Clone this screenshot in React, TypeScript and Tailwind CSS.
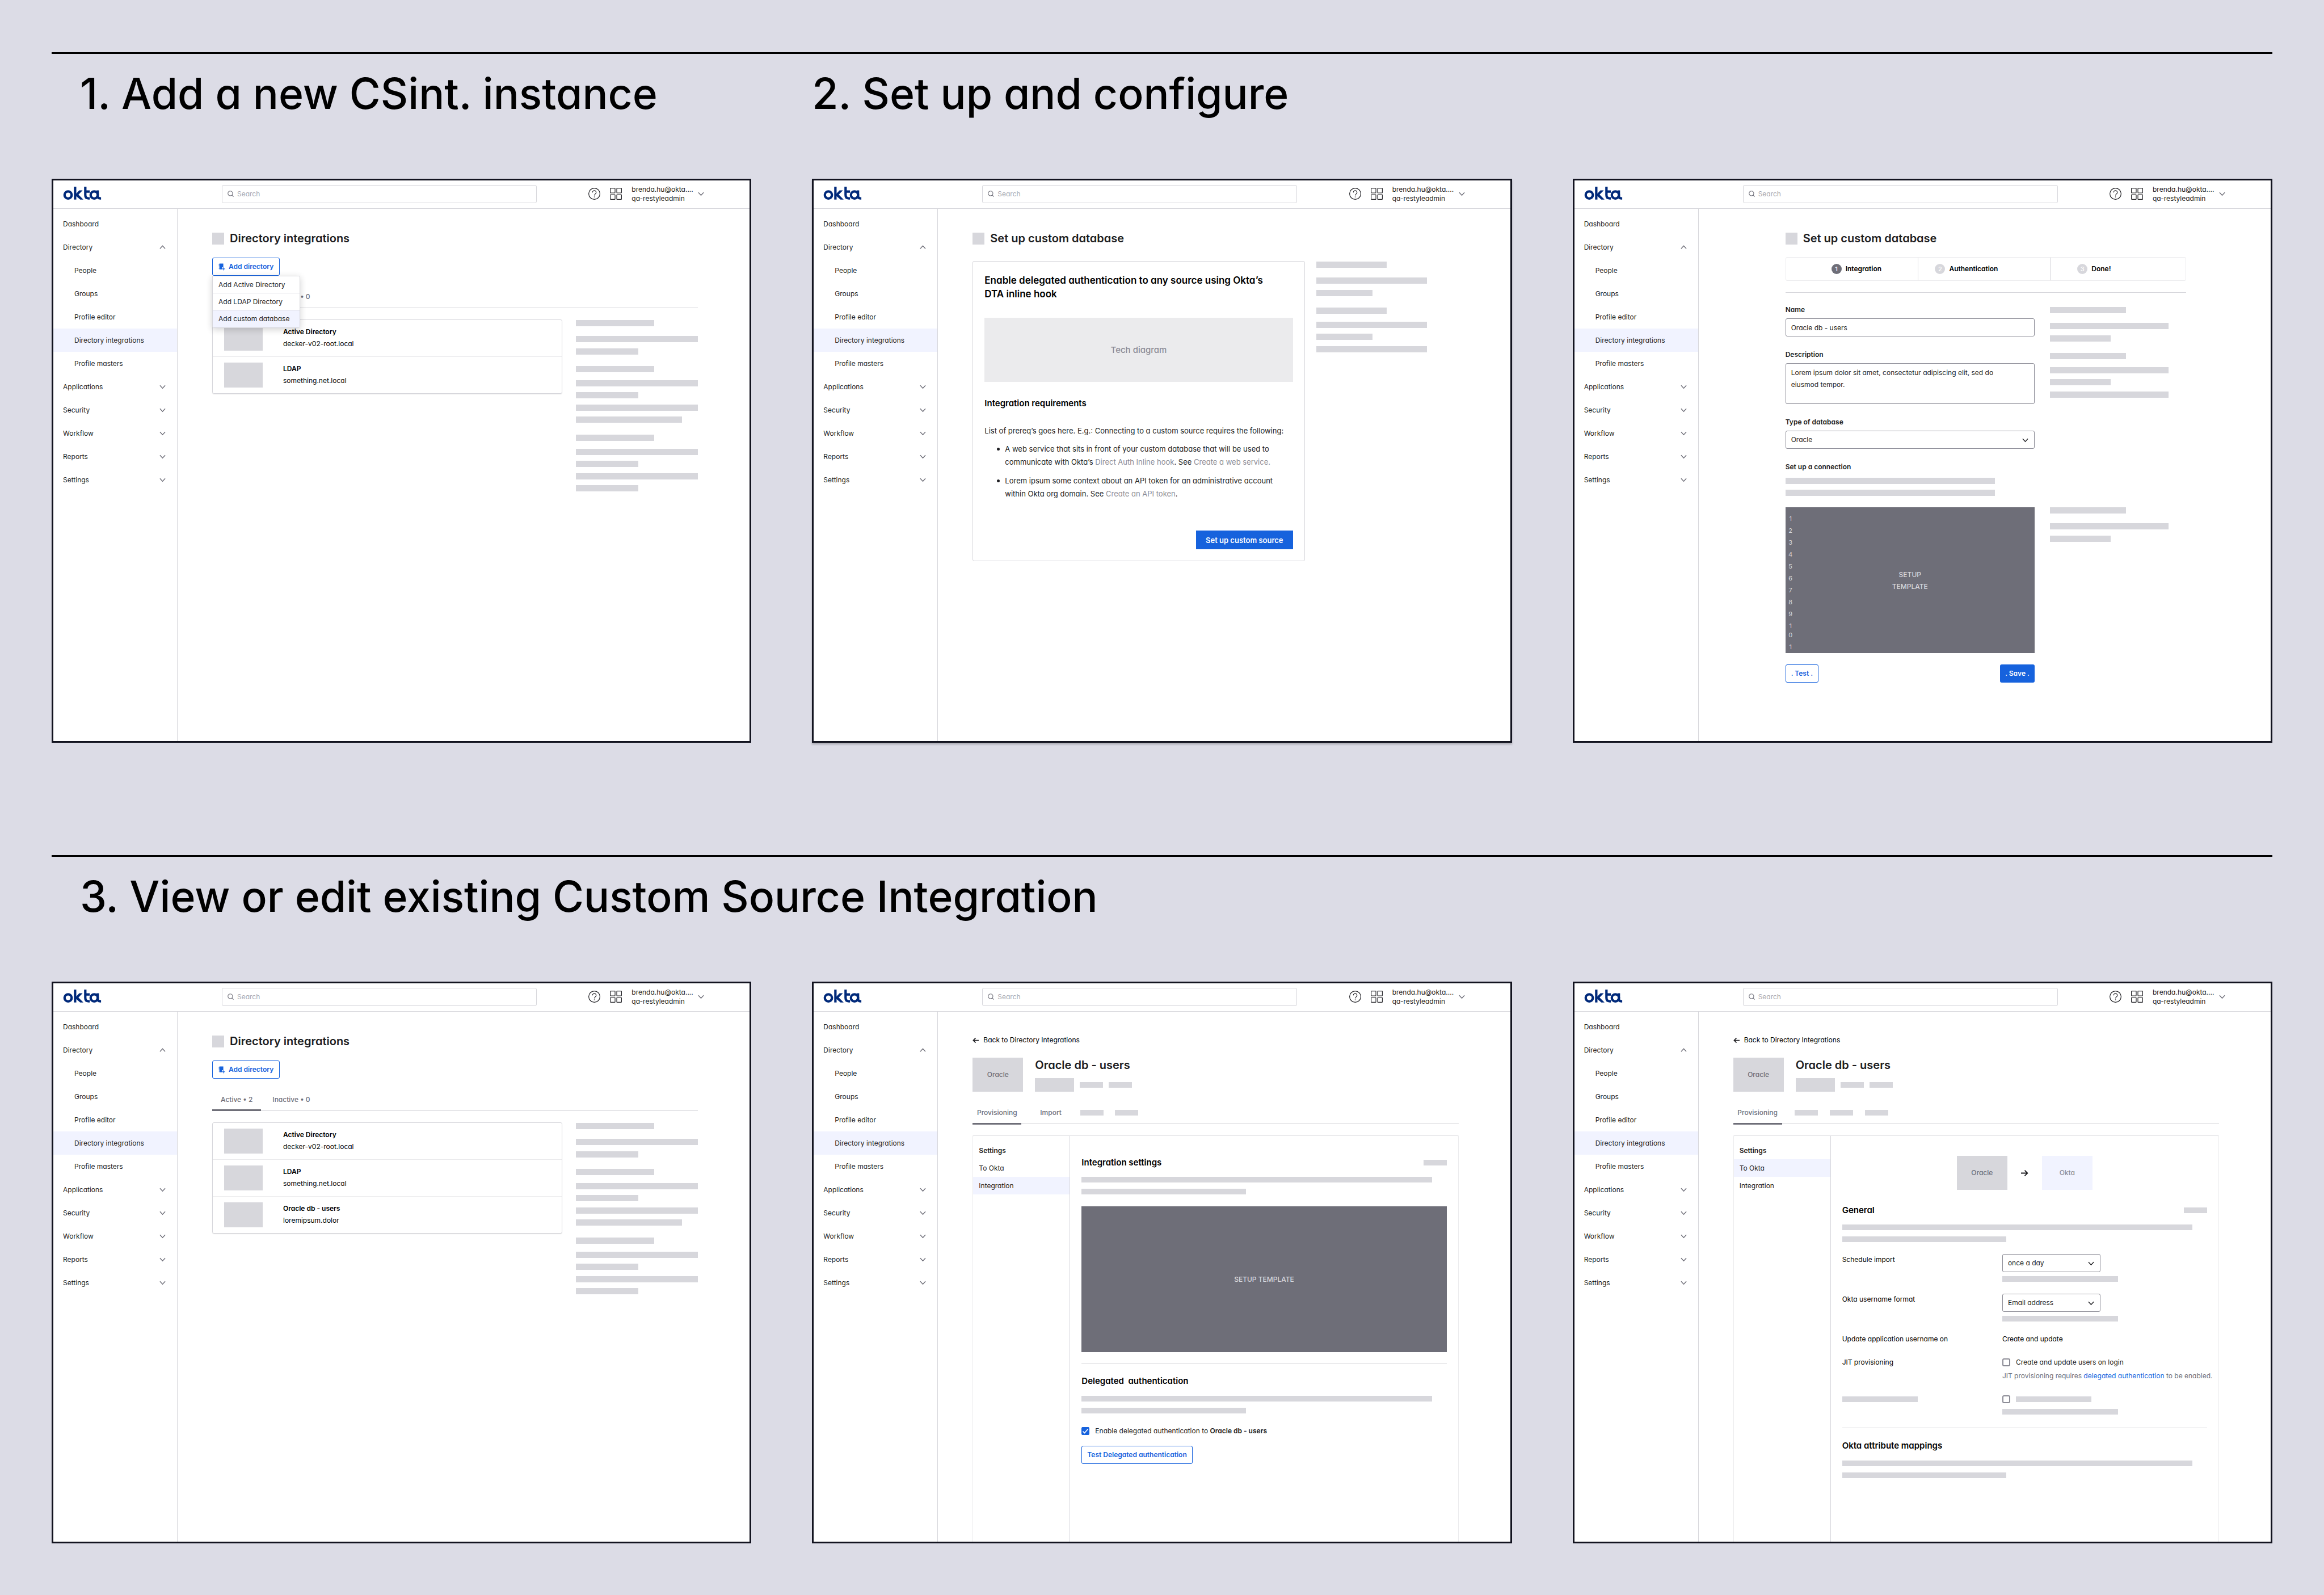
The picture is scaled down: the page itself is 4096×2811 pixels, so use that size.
import { useId, type ReactNode } from "react";

/* ---------- icons ---------- */

function OktaLogo() {
  return (
    <svg viewBox="0 0 238 82" className="h-[23px] w-[68px]" role="img" aria-label="okta">
      <g fill="none" stroke="#00297a" strokeWidth="15">
        <circle cx="30" cy="52" r="22.5" />
        <path d="M74 0V81" />
        <path d="M138 0V53q0 20.500 20 20.500h8M138 31h28" />
        <circle cx="194" cy="52" r="22.500" />
        <path d="M216 23V58q0 15.500 15 15.500h6" />
      </g>
      <path d="M78 46 100 23h21L95 50l31 31h-20L78 57Z" fill="#00297a" />
    </svg>
  );
}

function Chevron({ up = false, className = "" }: { up?: boolean; className?: string }) {
  return (
    <svg viewBox="0 0 12 12" className={className} fill="none" stroke="currentColor" strokeWidth="1.5" aria-hidden="true">
      <path d={up ? "M1 9 6 3.500 11 9" : "M1 3.500 6 9 11 3.500"} />
    </svg>
  );
}

function SearchIcon() {
  return (
    <svg viewBox="0 0 12 12" className="pointer-events-none absolute top-[10px] left-[10px] size-[11px] text-[#6e6e78]" fill="none" stroke="currentColor" strokeWidth="1.200" aria-hidden="true">
      <circle cx="5.300" cy="5.300" r="4.500" />
      <path d="m8.600 8.600 2.900 2.900" />
    </svg>
  );
}

function HelpIcon() {
  return (
    <svg viewBox="0 0 24 24" className="size-[21px]" fill="none" stroke="#1d1d21" strokeWidth="1.300" aria-hidden="true">
      <circle cx="12" cy="12" r="11.300" />
      <path d="M8.300 9.300a3.700 3.700 0 1 1 5.700 3.100c-1.300.9-2 1.500-2 3.100" />
      <path d="M12 17.600v1.500" strokeWidth="1.500" />
    </svg>
  );
}

function GridIcon() {
  return (
    <svg viewBox="0 0 24 24" className="size-[21px]" fill="none" stroke="#1d1d21" strokeWidth="1.300" aria-hidden="true">
      <rect x=".7" y=".7" width="9.600" height="9.600" rx=".8" />
      <rect x="13.700" y=".7" width="9.600" height="9.600" rx=".8" />
      <rect x=".7" y="13.700" width="9.600" height="9.600" rx=".8" />
      <rect x="13.700" y="13.700" width="9.600" height="9.600" rx=".8" />
    </svg>
  );
}

function AddBookIcon() {
  return (
    <svg viewBox="0 0 14 15" className="h-[13px] w-[12px]" fill="none" stroke="currentColor" aria-hidden="true">
      <path d="M2 .5h8v7.500H7.500v4.500H2Z" fill="currentColor" stroke="none" />
      <path d="M.5 2.500H3M.5 5H3M.5 7.500H3M.5 10H3" strokeWidth="1" />
      <path d="M10.500 8.500v6M7.500 11.500h6" strokeWidth="1.300" />
    </svg>
  );
}

function Arrow({ left = false, className = "" }: { left?: boolean; className?: string }) {
  return (
    <svg viewBox="0 0 12 12" className={className} fill="none" stroke="#1d1d21" strokeWidth="1.700" aria-hidden="true">
      <path d={left ? "M12 6H1.500M6 1.500 1.500 6 6 10.500" : "M0 6h10.500M6 1.500 10.500 6 6 10.500"} />
    </svg>
  );
}

/* ---------- shared pieces ---------- */

function Bar({ className }: { className: string }) {
  return <div className={`shrink-0 bg-[#d7d7dc] ${className}`} />;
}

const groupA = ["w-[64%]", "mt-[17px] w-full", "mt-[11px] w-[51%]"];
const groupB = ["mt-[20px] w-[64%]", "mt-[14px] w-full", "mt-[10px] w-[51%]", "mt-[11px] w-full"];
const groupC = ["mt-[10px] w-[87%]", "mt-[21px] w-[64%]", "mt-[14px] w-full", "mt-[10px] w-[51%]", "mt-[11px] w-full", "mt-[10px] w-[51%]"];

function BarStack({ bars, className = "" }: { bars: string[]; className?: string }) {
  return (
    <div className={`flex flex-col ${className}`}>
      {bars.map((b, i) => (
        <Bar key={i} className={`h-[11px] ${b}`} />
      ))}
    </div>
  );
}

function TextLines({ className = "" }: { className?: string }) {
  return (
    <div className={`flex flex-col gap-[11px] ${className}`}>
      <Bar className="h-[10px] w-[96%]" />
      <Bar className="h-[10px] w-[45%]" />
    </div>
  );
}

const navItems: { label: string; sub?: boolean; open?: boolean; more?: boolean; current?: boolean }[] = [
  { label: "Dashboard" },
  { label: "Directory", open: true },
  { label: "People", sub: true },
  { label: "Groups", sub: true },
  { label: "Profile editor", sub: true },
  { label: "Directory integrations", sub: true, current: true },
  { label: "Profile masters", sub: true },
  { label: "Applications", more: true },
  { label: "Security", more: true },
  { label: "Workflow", more: true },
  { label: "Reports", more: true },
  { label: "Settings", more: true },
];

function Screen({ children, className = "" }: { children: ReactNode; className?: string }) {
  return (
    <article className={`flex flex-col border-[3px] border-[#12131f] bg-white text-[12px] leading-[20px] text-[#1d1d21] ${className}`}>
      <header className="flex h-[50px] items-center border-b border-[#d7d7dc] pr-[80px] pl-[17px]">
        <a href="#home" className="mb-[4px] w-[280px] shrink-0">
          <OktaLogo />
        </a>
        <div className="relative mb-[2px] max-w-[555px] flex-1">
          <SearchIcon />
          <input
            type="search"
            aria-label="Search"
            placeholder="Search"
            className="h-[32px] w-full rounded-[3px] border border-[#d7d7dc] pr-3 pl-[26px] text-[12px] outline-none placeholder:text-[#a7a7b0]"
          />
        </div>
        <div className="mb-[2px] ml-auto flex items-center gap-[17px]">
          <button type="button" aria-label="Help">
            <HelpIcon />
          </button>
          <button type="button" aria-label="Apps">
            <GridIcon />
          </button>
          <button type="button" className="flex items-center gap-[15px] text-left text-[12px] leading-[16px]">
            <span className="w-[102px]">
              <span className="block">brenda.hu@okta....</span>
              <span className="block">qa-restyleadmin</span>
            </span>
            <Chevron className="size-[11px] text-[#6e6e78]" />
          </button>
        </div>
      </header>
      <div className="flex flex-1">
        <nav className="w-[219px] shrink-0 border-r border-[#d7d7dc] pt-[6px]">
          <ul>
            {navItems.map((n) => (
              <li key={n.label}>
                <a
                  href={`#${n.label.toLowerCase().replace(" ", "-")}`}
                  className={`flex h-[41px] items-center justify-between pr-[20px] ${n.sub ? "pl-[37px]" : "pl-[17px]"} ${n.current ? "bg-[#f1f3ff]" : ""}`}
                >
                  {n.label}
                  {(n.open || n.more) && <Chevron up={n.open} className="size-[11px] text-[#6e6e78]" />}
                </a>
              </li>
            ))}
          </ul>
        </nav>
        {children}
      </div>
    </article>
  );
}

function PageTitle({ children }: { children: ReactNode }) {
  return (
    <div className="flex items-center gap-[10px]">
      <div className="size-[21px] bg-[#d7d7dc]" />
      <h2 className="text-[20px] leading-[21px] font-semibold">{children}</h2>
    </div>
  );
}

function TitleBig({ children, className = "" }: { children: ReactNode; className?: string }) {
  return <h1 className={`pt-[28px] pl-[50px] text-[75px] leading-[84px] font-medium whitespace-nowrap text-black ${className}`}>{children}</h1>;
}

/* ---------- directory list ---------- */

function DirectoryScreen({ items, menu = false }: { items: [string, string][]; menu?: boolean }) {
  return (
    <Screen className="min-h-[990px]">
      <main className="flex-1 pt-[42px] pr-[91px] pl-[61px]">
        <PageTitle>Directory integrations</PageTitle>
        <div className="relative mt-[23px] w-fit">
          <button type="button" className="flex h-[32px] items-center gap-[6px] rounded-[3px] border border-[#1662dd] px-[10px] font-semibold text-[#1662dd]">
            <AddBookIcon />
            Add directory
          </button>
          {menu && (
            <ul className="absolute top-full left-0 z-10 w-[155px] rounded-b-[3px] border border-[#d7d7dc] bg-white shadow-[0_3px_12px_rgba(29,29,33,0.2)]">
              <li>
                <button type="button" className="h-[30px] w-full border-b border-[#d7d7dc] pl-[10px] text-left">Add Active Directory</button>
              </li>
              <li>
                <button type="button" className="h-[30px] w-full border-b border-[#d7d7dc] pl-[10px] text-left">Add LDAP Directory</button>
              </li>
              <li>
                <button type="button" className="h-[30px] w-full bg-[#f1f3ff] pl-[10px] text-left">Add custom database</button>
              </li>
            </ul>
          )}
        </div>
        <div role="tablist" className="mt-[27px] flex gap-[5px] border-b border-[#d7d7dc] font-medium text-[#6e6e78]">
          <button role="tab" aria-selected="true" type="button" className="-mb-px border-b-[3px] border-[#6e6e78] px-[15px] pb-[7px]">Active • 2</button>
          <button role="tab" aria-selected="false" type="button" className="-mb-px px-[15px] pb-[10px]">Inactive • 0</button>
        </div>
        <div className="mt-[20px] grid grid-cols-[617fr_216fr] items-start gap-[24px]">
          <ul className="rounded-[3px] border border-[#d7d7dc] shadow-[0_1px_1px_rgba(29,29,33,0.12)]">
            {items.map(([name, host]) => (
              <li key={name} className="flex items-start gap-[36px] border-b border-[#ebebed] px-[20px] py-[10px] text-black last:border-b-0">
                <div className="h-[44px] w-[68px] bg-[#d7d7dc]" />
                <div className="leading-[21px]">
                  <h3 className="font-semibold">{name}</h3>
                  <p>{host}</p>
                </div>
              </li>
            ))}
          </ul>
          <BarStack bars={[...groupA, ...groupB, ...groupC]} className="pt-px" />
        </div>
      </main>
    </Screen>
  );
}

/* ---------- custom database intro ---------- */

function IntroScreen() {
  return (
    <Screen className="min-h-[994px] shadow-[0_3px_3px_rgba(29,29,33,0.25)]">
      <main className="flex-1 pt-[42px] pr-[147px] pl-[61px]">
        <PageTitle>Set up custom database</PageTitle>
        <div className="mt-[29px] grid grid-cols-[3fr_1fr] items-start gap-[20px]">
          <section className="rounded-[3px] border border-[#d7d7dc] px-[20px] pt-[21px] pb-[20px]">
            <h3 className="text-[17px] leading-[24px] font-semibold text-black">
              Enable delegated authentication to any source using Okta’s
              <br />
              DTA inline hook
            </h3>
            <div className="mt-[30px] flex h-[113px] items-center justify-center bg-[#ebebed] text-[15px] font-medium text-[#8c8c96]">Tech diagram</div>
            <h4 className="mt-[27px] text-[15px] leading-[22px] font-semibold text-black">Integration requirements</h4>
            <p className="mt-[25px] text-[13px] leading-[24px]">List of prereq’s goes here. E.g.: Connecting to a custom source requires the following:</p>
            <ul className="mt-[9px] flex flex-col gap-[10px] pr-[20px] pl-[22px] text-[13px] leading-[23px]">
              <li className="flex gap-[9px]">
                <span className="mt-[9px] size-[5px] shrink-0 rounded-full bg-[#1d1d21]" />
                <p>
                  A web service that sits in front of your custom database that will be used to communicate with Okta’s{" "}
                  <a href="#hook" className="text-[#8c8c96]">Direct Auth Inline hook</a>. See{" "}
                  <a href="#service" className="text-[#8c8c96]">Create a web service.</a>
                </p>
              </li>
              <li className="flex gap-[9px]">
                <span className="mt-[9px] size-[5px] shrink-0 rounded-full bg-[#1d1d21]" />
                <p>
                  Lorem ipsum some context about an API token for an administrative account within Okta org domain. See{" "}
                  <a href="#token" className="text-[#8c8c96]">Create an API token</a>.
                </p>
              </li>
            </ul>
            <div className="mt-[53px] flex justify-end">
              <button type="button" className="h-[33px] bg-[#1662dd] px-[17px] text-[13px] font-semibold text-white">Set up custom source</button>
            </div>
          </section>
          <BarStack bars={[...groupA, ...groupB]} className="pt-px" />
        </div>
      </main>
    </Screen>
  );
}

/* ---------- set-up form ---------- */

function Select({ id, value, className = "" }: { id: string; value: string; className?: string }) {
  return (
    <div className={`relative ${className}`}>
      <select id={id} defaultValue={value} className="h-[32px] w-full appearance-none rounded-[3px] border border-[#8c8c96] bg-white pr-[28px] pl-[9px] text-[12px]">
        <option>{value}</option>
      </select>
      <Chevron className="pointer-events-none absolute top-[11px] right-[11px] size-[11px]" />
    </div>
  );
}

function Step({ n, label, active = false, className }: { n: number; label: string; active?: boolean; className: string }) {
  return (
    <li className={`flex items-center gap-[7px] font-semibold text-black ${className}`}>
      <span className={`flex size-[18px] items-center justify-center rounded-full text-[11px] leading-[18px] font-medium text-white ${active ? "bg-[#6e6e78]" : "bg-[#d7d7dc]"}`}>{n}</span>
      {label}
    </li>
  );
}

function SetupScreen() {
  const id = useId();
  return (
    <Screen className="min-h-[994px]">
      <main className="flex-1 pt-[42px] pr-[149px] pl-[153px]">
        <PageTitle>Set up custom database</PageTitle>
        <ol className="mt-[22px] grid h-[42px] grid-cols-[233fr_233fr_239fr] rounded-[3px] border border-[#ebebed]">
          <Step n={1} label="Integration" active className="pl-[80px]" />
          <Step n={2} label="Authentication" className="border-l border-[#d7d7dc] pl-[29px]" />
          <Step n={3} label="Done!" className="border-l border-[#d7d7dc] pl-[47px]" />
        </ol>
        <hr className="mt-[20px] border-[#d7d7dc]" />
        <form className="mt-[20px] grid grid-cols-[439fr_209fr] gap-x-[27px] gap-y-[20px] pr-[31px]">
          <div className="flex flex-col gap-[22px]">
            <div className="flex flex-col gap-[5px]">
              <label htmlFor={`${id}n`} className="font-semibold">Name</label>
              <input id={`${id}n`} type="text" defaultValue="Oracle db - users" className="h-[32px] rounded-[3px] border border-[#8c8c96] px-[9px] text-[12px]" />
            </div>
            <div className="flex flex-col gap-[5px]">
              <label htmlFor={`${id}d`} className="font-semibold">Description</label>
              <textarea
                id={`${id}d`}
                defaultValue="Lorem ipsum dolor sit amet, consectetur adipiscing elit, sed do eiusmod tempor."
                className="h-[72px] resize-none rounded-[3px] border border-[#8c8c96] py-[5px] pr-[60px] pl-[9px] text-[12px] leading-[21px]"
              />
            </div>
            <div className="flex flex-col gap-[5px]">
              <label htmlFor={`${id}t`} className="font-semibold">Type of database</label>
              <Select id={`${id}t`} value="Oracle" />
            </div>
            <div className="flex flex-col">
              <h3 className="font-semibold">Set up a connection</h3>
              <Bar className="mt-[9px] h-[11px] w-[84%]" />
              <Bar className="mt-[10px] h-[11px] w-[84%]" />
            </div>
          </div>
          <BarStack bars={[...groupA, ...groupB]} className="pt-[5px]" />
          <div>
            <div className="grid h-[257px] grid-cols-[18px_1fr_18px] bg-[#6e6e78]">
              <ol className="flex flex-col gap-[5px] pt-[12px] text-center text-[11px] leading-[16px] text-[#d7d7dc]">
                {["1", "2", "3", "4", "5", "6", "7", "8", "9", "10", "1"].map((n, i) => (
                  <li key={i} className="w-[18px] px-[5px] break-all">{n}</li>
                ))}
              </ol>
              <p className="flex flex-col items-center justify-center leading-[21px] font-medium text-[#d7d7dc]">
                <span>SETUP</span>
                <span>TEMPLATE</span>
              </p>
            </div>
            <div className="mt-[20px] flex justify-between font-semibold">
              <button type="button" className="h-[32px] rounded-[3px] border border-[#1662dd] px-[9px] text-[#1662dd]">. Test .</button>
              <button type="submit" className="h-[32px] rounded-[3px] bg-[#1662dd] px-[9px] text-white">. Save .</button>
            </div>
          </div>
          <BarStack bars={groupA} />
        </form>
      </main>
    </Screen>
  );
}

/* ---------- integration detail ---------- */

function DetailScreen({ tabs, current, children }: { tabs: ReactNode; current: string; children: ReactNode }) {
  return (
    <Screen className="min-h-[990px]">
      <main className="flex flex-1 flex-col pt-[40px] pr-[91px] pl-[61px]">
        <a href="#integrations" className="flex items-center gap-[8px] text-black">
          <Arrow left className="size-[11px]" />
          Back to Directory Integrations
        </a>
        <div className="mt-[21px] flex gap-[21px]">
          <div className="flex h-[60px] w-[89px] items-center justify-center bg-[#d7d7dc] font-medium text-[#6e6e78]">Oracle</div>
          <div>
            <h2 className="pt-px text-[20px] leading-[24px] font-semibold">Oracle db - users</h2>
            <div className="mt-[11px] flex items-center gap-[10px]">
              <Bar className="h-[24px] w-[69px]" />
              <Bar className="h-[10px] w-[41px]" />
              <Bar className="h-[10px] w-[41px]" />
            </div>
          </div>
        </div>
        <div role="tablist" className="mt-[27px] flex border-b border-[#d7d7dc] font-medium text-[#6e6e78]">
          <button role="tab" aria-selected="true" type="button" className="-mb-[2px] w-[86px] border-b-[3px] border-[#6e6e78] pb-[8px]">Provisioning</button>
          {tabs}
        </div>
        <div className="mt-[19px] flex flex-1 rounded-t-[3px] border-x border-t-2 border-[#ebebed]">
          <nav className="w-[171px] shrink-0 border-r border-[#d7d7dc] pt-[10px] leading-[31px]">
            <h3 className="px-[10px] font-semibold">Settings</h3>
            {["To Okta", "Integration"].map((s) => (
              <a key={s} href={`#${s}`} className={`block px-[10px] ${s === current ? "bg-[#f1f3ff]" : ""}`}>
                {s}
              </a>
            ))}
          </nav>
          <div className="flex-1 px-[20px]">{children}</div>
        </div>
      </main>
    </Screen>
  );
}

function SectionHead({ children, edit = true }: { children: ReactNode; edit?: boolean }) {
  return (
    <div className="flex items-center justify-between">
      <h3 className="text-[15px] leading-[20px] font-semibold text-black">{children}</h3>
      {edit && <Bar className="h-[10px] w-[41px]" />}
    </div>
  );
}

function IntegrationScreen() {
  const id = useId();
  return (
    <DetailScreen
      current="Integration"
      tabs={
        <>
          <button role="tab" aria-selected="false" type="button" className="px-[33px] pb-[9px]">Import</button>
          <div className="flex h-[20px] items-center gap-[20px]">
            <Bar className="h-[10px] w-[41px]" />
            <Bar className="h-[10px] w-[41px]" />
          </div>
        </>
      }
    >
      <div className="pt-[37px]">
        <SectionHead>Integration settings</SectionHead>
        <TextLines className="mt-[15px]" />
        <p className="mt-[21px] flex h-[257px] items-center justify-center bg-[#6e6e78] font-medium text-[#d7d7dc]">SETUP TEMPLATE</p>
        <hr className="my-[20px] border-[#d7d7dc]" />
        <SectionHead edit={false}>
          <span className="whitespace-pre">Delegated  authentication</span>
        </SectionHead>
        <TextLines className="mt-[16px]" />
        <div className="mt-[21px] flex items-center gap-[10px]">
          <span className="relative flex size-[14px]">
            <input id={id} type="checkbox" defaultChecked className="peer size-[14px] appearance-none rounded-[2px] border border-[#8c8c96] checked:border-[#1662dd] checked:bg-[#1662dd]" />
            <svg viewBox="0 0 14 14" className="pointer-events-none absolute inset-0 hidden size-[14px] peer-checked:block" fill="none" stroke="#fff" strokeWidth="1.600" aria-hidden="true">
              <path d="m2.500 7.500 3 3 6-7" />
            </svg>
          </span>
          <label htmlFor={id}>
            Enable delegated authentication to <b className="font-semibold">Oracle db - users</b>
          </label>
        </div>
        <button type="button" className="mt-[16px] h-[32px] rounded-[3px] border border-[#1662dd] px-[9px] font-semibold text-[#1662dd]">Test Delegated authentication</button>
      </div>
    </DetailScreen>
  );
}

function ToOktaScreen() {
  const id = useId();
  return (
    <DetailScreen
      current="To Okta"
      tabs={
        <div className="ml-[22px] flex h-[20px] items-center gap-[21px]">
          <Bar className="h-[10px] w-[41px]" />
          <Bar className="h-[10px] w-[41px]" />
          <Bar className="h-[10px] w-[41px]" />
        </div>
      }
    >
      <div className="pt-[35px]">
        <div className="flex items-center justify-center gap-[24px] font-medium">
          <div className="flex h-[60px] w-[89px] items-center justify-center bg-[#d7d7dc] text-[#6e6e78]">Oracle</div>
          <Arrow className="size-[13px]" />
          <div className="flex h-[60px] w-[89px] items-center justify-center bg-[#f1f3ff] text-[#8c8c96]">Okta</div>
        </div>
        <div className="mt-[26px]">
          <SectionHead>General</SectionHead>
        </div>
        <TextLines className="mt-[15px]" />
        <div className="mt-[21px] grid grid-cols-[minmax(0,283fr)_minmax(0,362fr)] gap-y-[21px] text-black">
          <label htmlFor={`${id}s`}>Schedule import</label>
          <div className="text-[#1d1d21]">
            <Select id={`${id}s`} value="once a day" className="w-[173px]" />
            <Bar className="mt-[7px] h-[10px] w-[204px]" />
          </div>
          <label htmlFor={`${id}u`}>Okta username format</label>
          <div className="text-[#1d1d21]">
            <Select id={`${id}u`} value="Email address" className="w-[173px]" />
            <Bar className="mt-[7px] h-[10px] w-[204px]" />
          </div>
          <p>Update application username on</p>
          <p>Create and update</p>
          <p>JIT provisioning</p>
          <div>
            <div className="flex items-center gap-[10px]">
              <input id={`${id}j`} type="checkbox" className="size-[14px] appearance-none rounded-[3px] border-2 border-[#8c8c96] checked:bg-[#1662dd]" />
              <label htmlFor={`${id}j`} className="text-[#1d1d21]">Create and update users on login</label>
            </div>
            <p className="mt-[4px] whitespace-nowrap text-[#6e6e78]">
              JIT provisioning requires <a href="#delegated" className="text-[#1662dd]">delegated authentication</a> to be enabled.
            </p>
          </div>
          <div className="flex h-[20px] items-center">
            <Bar className="h-[10px] w-[133px]" />
          </div>
          <div>
            <div className="flex h-[20px] items-center gap-[10px]">
              <input type="checkbox" aria-label="Option" className="size-[14px] appearance-none rounded-[3px] border-2 border-[#8c8c96] checked:bg-[#1662dd]" />
              <Bar className="h-[10px] w-[133px]" />
            </div>
            <Bar className="mt-[7px] h-[10px] w-[204px]" />
          </div>
        </div>
        <hr className="mt-[23px] mb-[21px] border-[#d7d7dc]" />
        <SectionHead edit={false}>Okta attribute mappings</SectionHead>
        <TextLines className="mt-[16px]" />
      </div>
    </DetailScreen>
  );
}

export default function App() {
  const base: [string, string][] = [
    ["Active Directory", "decker-v02-root.local"],
    ["LDAP", "something.net.local"],
  ];
  return (
    <div className="flex min-h-screen flex-col gap-[198px] bg-[#dcdce6] px-[91px] pt-[92px] pb-[91px] font-[Inter,sans-serif] [font-feature-settings:'cv11']">
      <section className="border-t-[3px] border-black">
        <div className="grid h-[220px] grid-cols-3 gap-x-[107px]">
          <TitleBig>1. Add a new CSint. instance</TitleBig>
          <TitleBig className="-ml-[50px]">2. Set up and configure</TitleBig>
        </div>
        <div className="grid grid-cols-3 gap-x-[107px]">
          <DirectoryScreen items={base} menu />
          <IntroScreen />
          <SetupScreen />
        </div>
      </section>
      <section className="border-t-[3px] border-black">
        <div className="h-[220px]">
          <TitleBig>3. View or edit existing Custom Source Integration</TitleBig>
        </div>
        <div className="grid grid-cols-3 gap-x-[107px]">
          <DirectoryScreen items={[...base, ["Oracle db - users", "loremipsum.dolor"]]} />
          <IntegrationScreen />
          <ToOktaScreen />
        </div>
      </section>
    </div>
  );
}
